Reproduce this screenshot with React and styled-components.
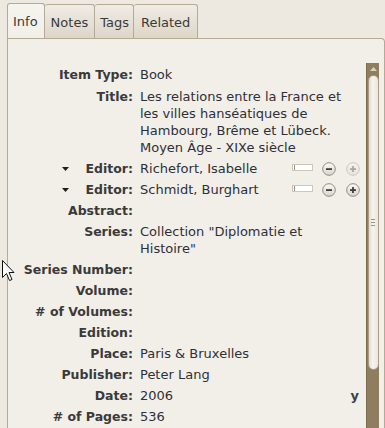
import React from "react";
import styled, { createGlobalStyle } from "styled-components";

const Global = createGlobalStyle`
  html, body { margin: 0; padding: 0; background: #ede9e1; }
  * { box-sizing: border-box; }
`;

const Window = styled.div`
  position: relative;
  width: 385px;
  height: 428px;
  overflow: hidden;
  background: #ede9e1;
  font-family: "DejaVu Sans", "Noto Sans", sans-serif;
  font-size: 13px;
  color: #3c3c3c;
`;

const TabBar = styled.div`
  display: flex;
  align-items: flex-end;
  height: 38px;
  padding-left: 7px;
`;

const Tab = styled.div`
  display: flex;
  align-items: center;
  height: ${(p) => (p.$active ? 35 : 34)}px;
  padding: 1px ${(p) => p.$pr || 5}px 0 ${(p) => p.$pl || 5}px;
  border: 1px solid #b5aa95;
  border-bottom: none;
  border-left-width: ${(p) => (p.$first ? 1 : 0)}px;
  border-radius: 3px 3px 0 0;
  background: ${(p) =>
    p.$active
      ? "linear-gradient(#f6f4ef, #f2efe9)"
      : "linear-gradient(#f0ece5, #ddd6c8)"};
  color: #3a3a3a;
  font-size: 13px;
  white-space: nowrap;
`;

const Panel = styled.div`
  display: flex;
  margin-left: 7px;
  width: 378px;
  height: 390px;
  padding-top: 24px;
  border: 1px solid #b5aa95;
  border-bottom: none;
  border-radius: 0 4px 0 0;
  background: #f2efe9;
`;

const Content = styled.div`
  flex: 1;
  min-width: 0;
  overflow: hidden;
`;

const Row = styled.div`
  display: grid;
  grid-template-columns: 125px 1fr;
  column-gap: 7px;
  padding: ${(p) => p.$pad || "2px 0"};
  line-height: 17px;
`;

const Label = styled.div`
  display: flex;
  justify-content: flex-end;
  align-items: center;
  height: 17px;
  font-weight: bold;
  font-size: 12.5px;
  color: #3a3a3a;
  white-space: nowrap;
`;

const Twisty = styled.svg`
  width: 7px;
  height: 4px;
  margin-right: 17px;
  flex: none;
`;

const Value = styled.div`
  display: flex;
  align-items: flex-start;
  min-height: 17px;
  color: #2f2f37;
  white-space: nowrap;
  padding-right: 6px;
`;

const Lines = styled.div`
  flex: 1;
`;

const Field = styled.span`
  position: relative;
  width: 21px;
  height: 7px;
  margin-top: 4px;
  margin-right: 9px;
  border: 1px solid #cdc6b9;
  background: #ffffff;
  flex: none;
  &::before {
    content: "";
    position: absolute;
    left: 1px;
    top: 0;
    width: 1px;
    height: 5px;
    background: #9a948a;
  }
`;

const RoundButton = styled.svg`
  width: 14px;
  height: 14px;
  margin-top: 2px;
  margin-left: ${(p) => p.$gap || 0}px;
  flex: none;
  opacity: ${(p) => (p.$disabled ? 0.4 : 1)};
`;

const DateHint = styled.span`
  margin-left: auto;
  margin-right: 1px;
  font-weight: bold;
  color: #3b3f4a;
`;

const Scrollbar = styled.div`
  display: flex;
  flex-direction: column;
  align-items: center;
  width: 13px;
  margin-right: 5px;
  background: #8e7d5e;
  border-left: 1px solid #7a6b50;
`;

const Stepper = styled.svg`
  width: 7px;
  height: 4px;
  margin-top: 4px;
  flex: none;
`;

const Thumb = styled.div`
  display: flex;
  flex-direction: column;
  align-items: center;
  justify-content: center;
  gap: 2px;
  width: 11px;
  height: 295px;
  margin-top: 4px;
  border-radius: 6px;
  background: linear-gradient(to right, #e2dccf, #f6f3ee 40%, #ece7dd);
  border: 1px solid #a99d86;
`;

const Grip = styled.span`
  width: 4px;
  height: 1px;
  background: #9c927f;
`;

const Cursor = styled.svg`
  position: absolute;
  left: 1px;
  top: 259px;
  width: 14px;
  height: 24px;
`;

function Circle({ plus, disabled, gap }) {
  return (
    <RoundButton viewBox="0 0 14 14" $disabled={disabled} $gap={gap}>
      <defs>
        <linearGradient id="cb" x1="0" y1="0" x2="0" y2="1">
          <stop offset="0" stopColor="#fbfaf8" />
          <stop offset="1" stopColor="#d9d4cb" />
        </linearGradient>
      </defs>
      <circle cx="7" cy="7" r="6.3" fill="url(#cb)" stroke="#8f8a82" strokeWidth="1" />
      <rect x="4" y="6.2" width="6" height="1.8" fill="#3f3f3f" />
      {plus && <rect x="6.1" y="4" width="1.8" height="6" fill="#3f3f3f" />}
    </RoundButton>
  );
}

const rows = [
  { label: "Item Type", lines: ["Book"], pad: "3px 0" },
  {
    label: "Title",
    lines: [
      "Les relations entre la France et",
      "les villes hanséatiques de",
      "Hambourg, Brême et Lübeck.",
      "Moyen Âge - XIXe siècle",
    ],
  },
  { label: "Editor", lines: ["Richefort, Isabelle"], creator: true, plusDisabled: true },
  { label: "Editor", lines: ["Schmidt, Burghart"], creator: true },
  { label: "Abstract", lines: [] },
  { label: "Series", lines: ['Collection "Diplomatie et', 'Histoire"'] },
  { label: "Series Number", lines: [] },
  { label: "Volume", lines: [] },
  { label: "# of Volumes", lines: [] },
  { label: "Edition", lines: [] },
  { label: "Place", lines: ["Paris & Bruxelles"] },
  { label: "Publisher", lines: ["Peter Lang"] },
  { label: "Date", lines: ["2006"], hint: "y" },
  { label: "# of Pages", lines: ["536"] },
];

export default function App() {
  return (
    <Window>
      <Global />
      <TabBar>
        <Tab $active $first $pl={5} $pr={6}>Info</Tab>
        <Tab $pl={6} $pr={6}>Notes</Tab>
        <Tab $pl={5} $pr={4}>Tags</Tab>
        <Tab $pl={7} $pr={7}>Related</Tab>
      </TabBar>
      <Panel>
        <Content>
          {rows.map((r, i) => (
            <Row key={i} $pad={r.pad}>
              <Label>
                {r.creator && (
                  <Twisty viewBox="0 0 7 4">
                    <path d="M0 0 H7 L3.5 4 Z" fill="#1e1e1e" />
                  </Twisty>
                )}
                {r.label}:
              </Label>
              <Value>
                <Lines>
                  {r.lines.map((l, j) => (
                    <div key={j}>{l}</div>
                  ))}
                </Lines>
                {r.creator && (
                  <>
                    <Field />
                    <Circle />
                    <Circle plus disabled={r.plusDisabled} gap={10} />
                  </>
                )}
                {r.hint && <DateHint>{r.hint}</DateHint>}
              </Value>
            </Row>
          ))}
        </Content>
        <Scrollbar>
          <Stepper viewBox="0 0 7 4">
            <path d="M0 4 L3.5 0 L7 4 Z" fill="#d9d2c3" />
          </Stepper>
          <Thumb>
            <Grip />
            <Grip />
            <Grip />
          </Thumb>
        </Scrollbar>
      </Panel>
      <Cursor viewBox="0 0 14 24">
        <path
          d="M1.5 1.5 L1.5 18.5 L5.5 14.5 L8.5 21.5 L11 20.5 L8 13.5 L13 13.5 Z"
          fill="#ffffff"
          stroke="#111111"
          strokeWidth="1"
          strokeLinejoin="round"
        />
      </Cursor>
    </Window>
  );
}
